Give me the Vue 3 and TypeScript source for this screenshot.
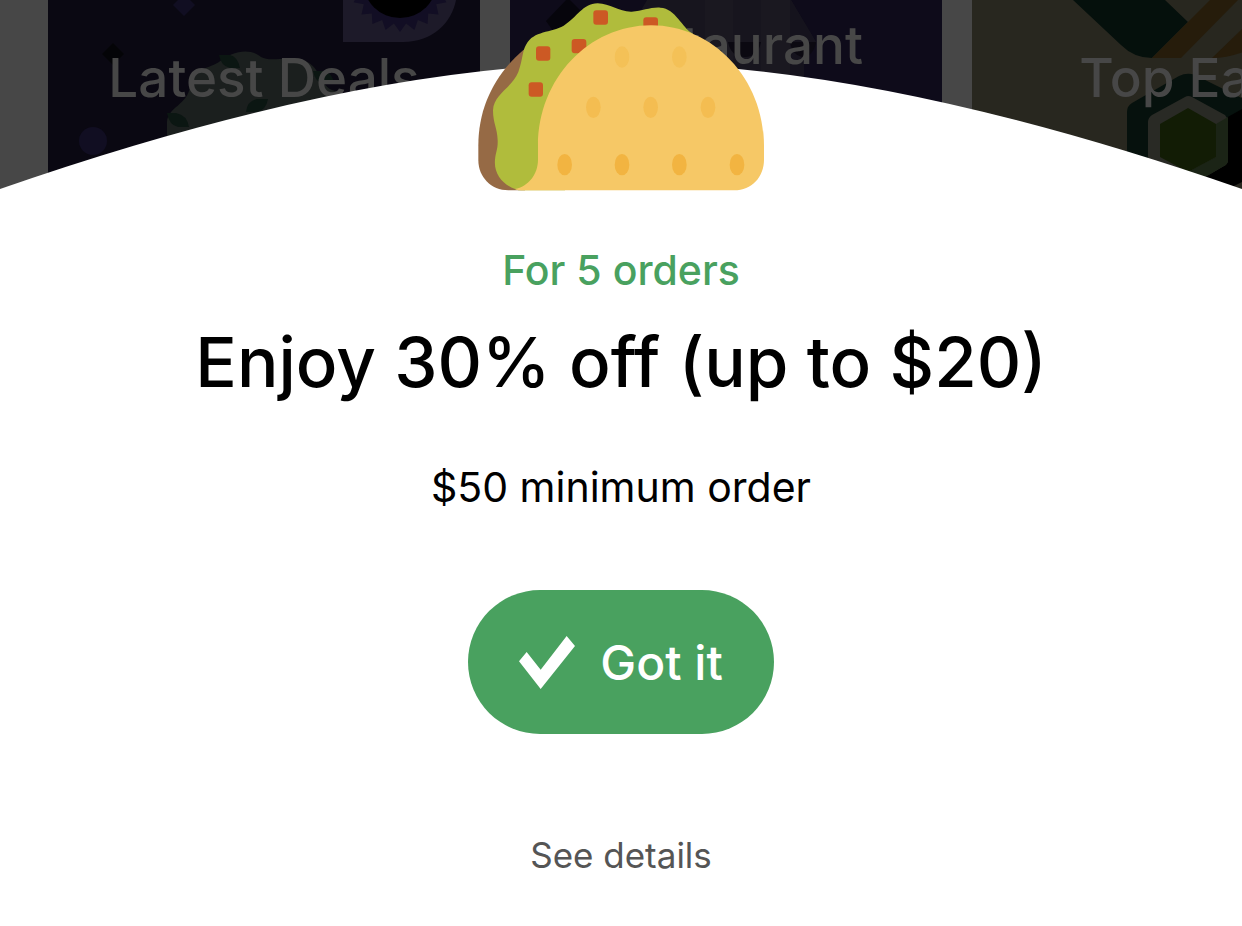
<script setup lang="ts">
interface Kernel {
  x: number
  y: number
  tone: string
}

const spikes = 22
const burst: string = Array.from({ length: spikes * 2 }, (_, i) => {
  const angle = (i * Math.PI) / spikes + Math.PI / 2
  const r = i % 2 === 0 ? 51 : 43
  return `${(352 + r * Math.cos(angle)).toFixed(1)},${(-19 + r * Math.sin(angle)).toFixed(1)}`
}).join(' ')

const kernels: Kernel[] = [
  { x: 471, y: 170, tone: 'pale' },
  { x: 643, y: 170, tone: 'pale' },
  { x: 385, y: 321, tone: 'mid' },
  { x: 557, y: 321, tone: 'mid' },
  { x: 729, y: 321, tone: 'mid' },
  { x: 299, y: 493, tone: 'deep' },
  { x: 471, y: 493, tone: 'deep' },
  { x: 643, y: 493, tone: 'deep' },
  { x: 816, y: 493, tone: 'deep' },
]
</script>

<template>
  <main class="screen">
    <header class="hero">
      <div class="cards">
        <article class="card deals">
          <svg class="art" viewBox="0 0 432 190" aria-hidden="true">
            <path d="M136 -6l11 11-11 11-11-11z" fill="#110e22" />
            <path d="M65 43l11 11-11 11-11-11z" fill="#040407" />
            <circle cx="45" cy="141" r="14" fill="#110e22" />
            <path d="M295 -10V42H355C385 42 404 22 408 0V-10Z" fill="#1d1a29" />
            <polygon :points="burst" fill="#120e24" />
            <circle cx="352" cy="-19" r="37" fill="#000" />
            <path d="M119 150V122C120 107 139 105 142 87C146 68 162 68 171 62C182 52 202 47 213 57C222 62 234 57 248 59C273 61 270 84 284 90C300 95 312 110 312 150Z" fill="#1b1f1e" />
            <path d="M171 55H182Q190 57 192 68H182Q173 66 171 55Z" fill="#0b1612" />
            <path d="M119 113H128Q139 115 141 127H130Q121 125 119 113Z" fill="#0b1612" />
            <path d="M198 112Q199 101 209 99H220Q218 111 208 112Z" fill="#0b1612" />
            <path d="M265 71H276Q285 73 286 84H276Q267 82 265 71Z" fill="#0b1612" />
          </svg>
          <h2 class="name">Latest Deals</h2>
        </article>
        <article class="card places">
          <svg class="art" viewBox="0 0 432 190" aria-hidden="true">
            <path d="M58 -2L85 25L58 52L36 21Z" fill="#06050c" />
            <path d="M137 0H281L306 42L294 56V90H130V12Z" fill="#17151e" />
            <path d="M195 0H223V90H195Z" fill="#1a1820" />
            <path d="M251 0H280V90H251Z" fill="#1a1820" />
            <path d="M280 0H281L306 42L294 56V90H280Z" fill="#15131d" />
            <path d="M218 42H251Q248 57 235 57Q221 57 218 42Z" fill="#0b0911" />
            <path d="M280 42H306Q303 57 292 57Q282 55 280 42Z" fill="#0b0911" />
          </svg>
          <h2 class="name raised">Restaurant</h2>
        </article>
        <article class="card eats">
          <svg class="art" viewBox="0 0 432 190" aria-hidden="true">
            <path d="M101 0L149 45Q162 58 180 58L216 22L193 0Z" fill="#05100c" />
            <path d="M238 0H266L209 58H180Z" fill="#261c0b" />
            <path d="M300 0L240 58Q262 58 290 44Z" fill="#261c0b" />
            <path d="M155 190V112Q155 106 160 103L207 76Q215 72 223 75L290 108V190Z" fill="#06110d" />
            <path d="M254 118L290 98V190H225L210 176Z" fill="#000" />
            <path d="M254 190L290 172V192H254Z" fill="#28271f" />
            <path d="M176 122Q176 118 180 115L213 97Q216 95 220 97L253 115Q256 118 256 122V160Q256 164 252 166L216 187L180 166Q176 164 176 160Z" fill="#292a25" />
            <path d="M244 124L256 117V160Q256 164 252 166L216 187V172L244 157Z" fill="#1b2416" />
            <path d="M188 124L216 108L244 124V157L216 172L188 157Z" fill="#121c05" />
          </svg>
          <h2 class="name">Top Eats</h2>
        </article>
      </div>
      <svg class="arc" viewBox="0 0 1242 192" preserveAspectRatio="none" aria-hidden="true">
        <path d="M0 189Q362 63 621 63T1242 189V192H0Z" fill="#fff" />
      </svg>
      <svg class="taco" viewBox="36 8 864 564" aria-hidden="true">
        <path d="M40 436C40 320 90 222 176 148L300 300L180 570H130C78 570 40 530 40 480Z" fill="#966a45" />
        <path d="M150 566C112 552 86 520 90 478C92 456 99 446 98 420C97 384 84 368 84 330C86 280 142 262 160 215C174 176 172 150 184 132C206 90 258 98 296 76C336 52 352 10 398 9C436 10 462 35 500 34C534 32 556 20 586 22C632 24 652 84 684 100L500 300L300 570H160Z" fill="#b0bc3c" />
        <g fill="#cc5924">
          <rect x="385" y="30" width="44" height="43" rx="9" />
          <rect x="535" y="51" width="44" height="43" rx="9" />
          <rect x="320" y="116" width="44" height="43" rx="9" />
          <rect x="213" y="138" width="43" height="43" rx="9" />
          <rect x="191" y="246" width="43" height="43" rx="9" />
        </g>
        <path d="M150 566C190 558 219 522 219 478V436C219 236 371 75 558 75C745 75 897 236 897 436V478C897 530 860 570 808 570H178C164 570 156 569 150 566Z" fill="#f6c866" />
        <ellipse v-for="(k, i) in kernels" :key="i" :class="k.tone" :cx="k.x" :cy="k.y" rx="22" ry="32" />
      </svg>
    </header>

    <section class="offer">
      <p class="scope">For 5 orders</p>
      <h1 class="headline">Enjoy 30% off (up to $20)</h1>
      <p class="minimum">$50 minimum order</p>
      <button class="accept" type="button">
        <svg class="tick" viewBox="0 0 168 159" aria-hidden="true">
          <path d="M0 76L23 48L65 101L143 0L168 30L65 159Z" fill="#fff" />
        </svg>
        <span>Got it</span>
      </button>
      <a class="details" href="#details">See details</a>
    </section>
  </main>
</template>

<style>
body {
  margin: 0;
  background: #fff;
}
</style>

<style scoped>
.screen {
  min-height: 100vh;
  overflow: hidden;
  background: #fff;
  font-family: Inter, Roboto, "Liberation Sans", sans-serif;
}

.hero {
  position: relative;
  background: #474747;
}

.cards {
  display: flex;
  gap: 30px;
  padding-left: 48px;
  overflow: hidden;
}

.card {
  position: relative;
  flex: 0 0 432px;
  height: 192px;
  overflow: hidden;
}

.deals {
  background: #0a0812;
}

.places {
  background: #0e0b1a;
}

.eats {
  background: #28271f;
}

.art {
  position: absolute;
  inset: 0;
  width: 432px;
  height: 190px;
}

.name {
  position: relative;
  margin: 0;
  padding-top: 44px;
  color: #474747;
  font-size: 53px;
  font-weight: 500;
  line-height: 68px;
  text-align: center;
}

.raised {
  padding-top: 11px;
}

.arc {
  position: absolute;
  left: 0;
  bottom: 0;
  width: 100%;
  height: 192px;
}

.taco {
  position: absolute;
  top: 3px;
  left: 50%;
  width: 288px;
  height: 188px;
  margin-left: -144px;
}

.pale {
  fill: #f4c157;
}

.mid {
  fill: #f4bd51;
}

.deep {
  fill: #f2b441;
}

.offer {
  display: flex;
  flex-direction: column;
  align-items: center;
  padding: 51px 24px 40px;
  text-align: center;
}

.scope,
.headline,
.minimum {
  margin: 0;
}

.scope {
  color: #49a15f;
  font-size: 41px;
  font-weight: 500;
  line-height: 54px;
}

.headline {
  margin-top: 21px;
  color: #000;
  font-size: 69px;
  font-weight: 500;
  line-height: 88px;
}

.minimum {
  margin-top: 54px;
  color: #000;
  font-size: 41px;
  line-height: 54px;
}

.accept {
  display: flex;
  align-items: center;
  gap: 25px;
  height: 144px;
  margin-top: 76px;
  padding: 0 51px;
  border: 0;
  border-radius: 72px;
  background: #49a15f;
  color: #fff;
  font: inherit;
  font-size: 48px;
  font-weight: 500;
  cursor: pointer;
}

.tick {
  width: 56px;
  height: 53px;
}

.details {
  margin-top: 97px;
  color: #555;
  font-size: 35px;
  line-height: 48px;
  text-decoration: none;
}
</style>
